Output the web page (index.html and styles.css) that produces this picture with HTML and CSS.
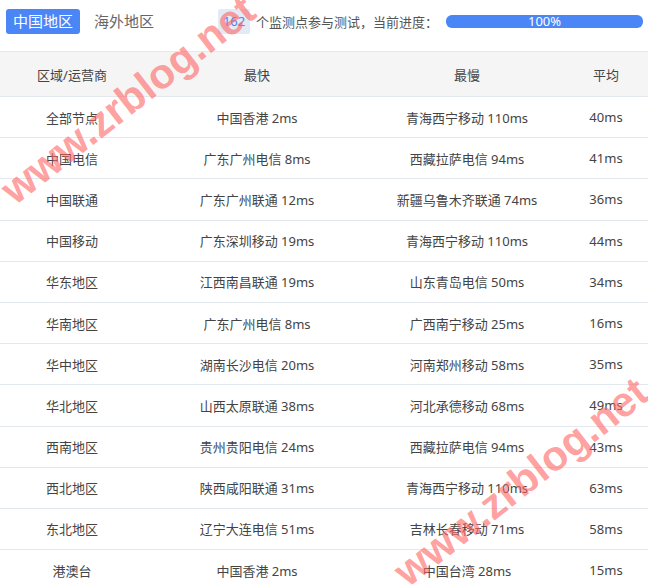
FILE: index.html
```html
<!DOCTYPE html>
<html lang="zh-CN">
<head>
<meta charset="utf-8">
<title>监测</title>
<link rel="stylesheet" href="styles.css">
</head>
<body>
<div class="page">
  <div class="topbar">
    <span class="tab tab-active">中国地区</span>
    <span class="tab">海外地区</span>
    <span class="count">162</span>
    <span class="desc">个监测点参与测试，当前进度：</span>
    <div class="progress"><div class="progress-fill" style="width:100%">100%</div></div>
  </div>
  <table class="stats">
    <colgroup>
      <col class="c1"><col class="c2"><col class="c3"><col class="c4">
    </colgroup>
    <thead>
      <tr><th>区域/运营商</th><th>最快</th><th>最慢</th><th>平均</th></tr>
    </thead>
    <tbody>
      <tr><td>全部节点</td><td>中国香港 2ms</td><td>青海西宁移动 110ms</td><td>40ms</td></tr>
      <tr><td>中国电信</td><td>广东广州电信 8ms</td><td>西藏拉萨电信 94ms</td><td>41ms</td></tr>
      <tr><td>中国联通</td><td>广东广州联通 12ms</td><td>新疆乌鲁木齐联通 74ms</td><td>36ms</td></tr>
      <tr><td>中国移动</td><td>广东深圳移动 19ms</td><td>青海西宁移动 110ms</td><td>44ms</td></tr>
      <tr><td>华东地区</td><td>江西南昌联通 19ms</td><td>山东青岛电信 50ms</td><td>34ms</td></tr>
      <tr><td>华南地区</td><td>广东广州电信 8ms</td><td>广西南宁移动 25ms</td><td>16ms</td></tr>
      <tr><td>华中地区</td><td>湖南长沙电信 20ms</td><td>河南郑州移动 58ms</td><td>35ms</td></tr>
      <tr><td>华北地区</td><td>山西太原联通 38ms</td><td>河北承德移动 68ms</td><td>49ms</td></tr>
      <tr><td>西南地区</td><td>贵州贵阳电信 24ms</td><td>西藏拉萨电信 94ms</td><td>43ms</td></tr>
      <tr><td>西北地区</td><td>陕西咸阳联通 31ms</td><td>青海西宁移动 110ms</td><td>63ms</td></tr>
      <tr><td>东北地区</td><td>辽宁大连电信 51ms</td><td>吉林长春移动 71ms</td><td>58ms</td></tr>
      <tr><td>港澳台</td><td>中国香港 2ms</td><td>中国台湾 28ms</td><td>15ms</td></tr>
    </tbody>
  </table>
  <div class="watermark wm1">www.zrblog.net</div>
  <div class="watermark wm2">www.zrblog.net</div>
</div>
</body>
</html>
```
FILE: styles.css
```css
html, body {
  margin: 0;
  padding: 0;
  background: #fff;
}
.page {
  position: relative;
  width: 648px;
  overflow: hidden;
  font-family: "Noto Sans", "Noto Sans CJK SC", sans-serif;
  color: #444;
}
.topbar {
  display: flex;
  align-items: center;
  height: 51px;
  padding: 0 5px 8px 6px;
  box-sizing: border-box;
}
.tab {
  font-size: 15px;
  line-height: 25px;
  padding: 0 7px;
  color: #666;
  border-radius: 3px;
}
.tab-active {
  background: #4a86f6;
  color: #fff;
}
.tab + .tab {
  margin-left: 7px;
}
.count {
  margin-left: 57px;
  width: 32px;
  height: 25px;
  line-height: 25px;
  text-align: center;
  font-size: 13px;
  color: #4a86f6;
  background: #e2eaf6;
  border-radius: 2px;
}
.desc {
  margin-left: 6px;
  font-size: 13px;
  color: #555;
}
.progress {
  margin-left: 8px;
  flex: 1;
  height: 13px;
  background: #e8eef8;
  border-radius: 6px;
}
.progress-fill {
  height: 13px;
  background: #4a86f6;
  color: #fff;
  font-size: 13px;
  line-height: 13px;
  text-align: center;
  border-radius: 6px;
}
.stats {
  width: 648px;
  border-collapse: collapse;
  table-layout: fixed;
  font-size: 13px;
}
.c1 { width: 144px; }
.c2 { width: 226px; }
.c3 { width: 194px; }
.c4 { width: 84px; }
.stats th {
  font-weight: normal;
  color: #444;
  background: #f5f5f5;
  height: 44px;
  padding: 0;
  border-top: 1px solid #e6e8eb;
  border-bottom: 1px solid #e3e8ef;
  text-align: center;
}
.stats td {
  height: 40.2px;
  padding: 0;
  text-align: center;
  color: #444;
  border-bottom: 1px solid #e3e8ef;
}
.watermark {
  position: absolute;
  font-family: "Liberation Sans", sans-serif;
  font-weight: bold;
  font-size: 42px;
  line-height: 1;
  color: rgba(255, 100, 100, 0.62);
  white-space: nowrap;
  transform: translate(-50%, -50%) rotate(-38deg);
  pointer-events: none;
}
.wm1 { left: 128px; top: 100px; }
.wm2 { left: 521px; top: 482px; }
```
